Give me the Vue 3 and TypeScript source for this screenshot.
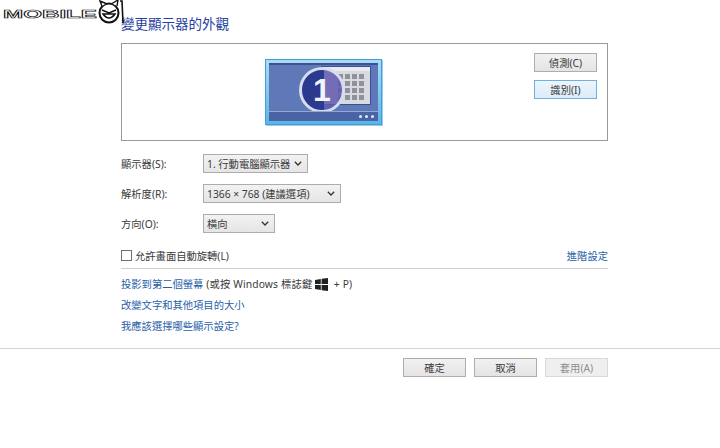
<script setup lang="ts">
const rows = [
  { label: '顯示器(S):', value: '1. 行動電腦顯示器', cls: 'w-display' },
  { label: '解析度(R):', value: '1366 × 768 (建議選項)', cls: 'w-res' },
  { label: '方向(O):', value: '橫向', cls: 'w-orient' },
]
const grid = Array.from({ length: 16 }, (_, i) => i)
</script>

<template>
  <div class="page">
    <svg class="logo" width="128" height="26" viewBox="0 0 128 26">
      <text x="3" y="17.500" textLength="94" lengthAdjust="spacingAndGlyphs" class="logo-text">MOBILE</text>
      <circle cx="109" cy="13" r="9.500" fill="#fff" stroke="#111" stroke-width="2" />
      <path d="M102 6 L100 1 L106 3.500 M112 3.500 L118 0 L117 6" fill="#fff" stroke="#111" stroke-width="1.400" />
      <path d="M102 10 L109 13 L116 10 M103 14 Q109 22 115 14 Z" fill="none" stroke="#111" stroke-width="1.500" />
      <path d="M120 1 L122 1 L123 23" fill="none" stroke="#111" stroke-width="1.600" />
    </svg>

    <main class="content">
      <h1 class="title">變更顯示器的外觀</h1>

      <section class="preview">
        <div class="monitor">
          <div class="screen">
            <div class="win">
              <div class="win-bar"></div>
              <div class="win-grid">
                <i v-for="n in grid" :key="n"></i>
              </div>
            </div>
            <div class="badge">1</div>
            <div class="taskbar">
              <b></b><b></b><b></b>
            </div>
          </div>
        </div>
        <div class="preview-buttons">
          <button class="btn btn-detect">偵測(C)</button>
          <button class="btn btn-detect btn-focus">識別(I)</button>
        </div>
      </section>

      <div class="form">
        <div v-for="r in rows" :key="r.label" class="row">
          <span class="label">{{ r.label }}</span>
          <div class="select" :class="r.cls">
            <span>{{ r.value }}</span>
            <svg width="8" height="5" viewBox="0 0 8 5"><path d="M.8 .8 L4 4 L7.200 .8" fill="none" stroke="#333" stroke-width="1.300" /></svg>
          </div>
        </div>
      </div>

      <div class="check-row">
        <label class="check"><span class="box"></span>允許畫面自動旋轉(L)</label>
        <a class="link">進階設定</a>
      </div>

      <div class="links">
        <div class="link-line">
          <a class="link">投影到第二個螢幕</a>
          <span class="hint">&nbsp;(或按 Windows 標誌鍵&nbsp;</span>
          <svg class="winlogo" width="13" height="13" viewBox="0 0 13 13"><path d="M0 2 L5.800 1 V6 H0 Z M6.600 .8 L13 0 V6 H6.600 Z M0 7 H5.800 V12 L0 11 Z M6.600 7 H13 V13 L6.600 12.200 Z" fill="#222" /></svg>
          <span class="hint">&nbsp;&nbsp;+ P)</span>
        </div>
        <a class="link">改變文字和其他項目的大小</a>
        <a class="link">我應該選擇哪些顯示設定?</a>
      </div>
    </main>

    <footer class="footer">
      <button class="btn btn-action">確定</button>
      <button class="btn btn-action">取消</button>
      <button class="btn btn-action btn-disabled">套用(A)</button>
    </footer>
  </div>
</template>

<style>
html, body { margin: 0; background: #fff; }
</style>

<style scoped>
.page {
  position: relative;
  width: 720px;
  height: 448px;
  background: #fff;
  overflow: hidden;
  font-family: "Noto Sans", "Noto Sans CJK TC", sans-serif;
  font-size: 10.300px;
  color: #3a3a3a;
}
.logo { position: absolute; left: 0; top: 0; }
.logo-text {
  font-family: "Liberation Sans", sans-serif;
  font-size: 11.500px;
  font-weight: 700;
  fill: #fff;
  stroke: #111;
  stroke-width: .6;
}
.content {
  width: 487px;
  margin-left: 121px;
  padding-top: 15px;
}
.title {
  margin: 0 0 9px;
  height: 19px;
  line-height: 19px;
  font-size: 13.500px;
  font-weight: 400;
  color: #1f429f;
}
.preview {
  box-sizing: border-box;
  height: 98px;
  border: 1px solid #9a9a9a;
  display: flex;
  padding: 15px 10px 0 143px;
  justify-content: space-between;
}
.monitor {
  box-sizing: border-box;
  width: 117px;
  height: 66px;
  padding: 3px;
  background: linear-gradient(180deg, #a9dcf5, #5cb5e6);
  border: 1px solid #3d9fdc;
  box-shadow: 1px 1px 0 #9bcdeb;
}
.screen {
  position: relative;
  height: 100%;
  background: #5f79b8;
  border-top: 2px solid #3d5292;
  box-sizing: border-box;
  overflow: hidden;
}
.win {
  position: absolute;
  left: 53px;
  top: 2px;
  width: 48px;
  height: 37px;
  background: #d9dae0;
  box-shadow: 0 0 0 1px #39508f;
}
.win-bar { height: 4px; background: #e9ebf0; }
.win-grid {
  display: grid;
  grid-template-columns: repeat(4, 5px);
  grid-auto-rows: 5px;
  gap: 2px;
  padding: 3px 0 0 16px;
}
.win-grid i { background: #8f919b; }
.badge {
  position: absolute;
  left: 30px;
  top: 2px;
  box-sizing: border-box;
  width: 46px;
  height: 46px;
  border-radius: 50%;
  border: 3px solid #d7dcee;
  background: linear-gradient(90deg, #2b3a8e 0 54%, rgba(96, 90, 175, .85) 54%);
  color: #f2f3fb;
  font: 700 32px/40px "Liberation Sans", sans-serif;
  text-align: center;
}
.taskbar {
  position: absolute;
  left: 0;
  right: 0;
  bottom: 0;
  height: 9px;
  border-top: 1px solid #8ea9d8;
  background: #4a63a4;
  display: flex;
  justify-content: flex-end;
  align-items: center;
  gap: 3px;
  padding-right: 4px;
}
.taskbar b {
  width: 3px;
  height: 3px;
  border-radius: 50%;
  background: #e5e9f5;
}
.preview-buttons {
  display: flex;
  flex-direction: column;
  gap: 8px;
  margin-top: -6px;
}
.btn {
  box-sizing: border-box;
  padding: 0;
  font: inherit;
  color: #3a3a3a;
  background: linear-gradient(180deg, #f1f1f1, #e4e4e4);
  border: 1px solid #adadad;
}
.btn-detect { width: 63px; height: 19px; }
.btn-focus {
  background: linear-gradient(180deg, #ecf5fc, #dcecf9);
  border-color: #6fb0de;
}
.form {
  display: flex;
  flex-direction: column;
  gap: 11px;
  margin-top: 13px;
}
.row { display: flex; align-items: center; height: 19px; }
.label { width: 82px; flex: none; }
.select {
  box-sizing: border-box;
  height: 19px;
  display: flex;
  align-items: center;
  justify-content: space-between;
  padding: 0 5px 0 3px;
  background: linear-gradient(180deg, #f2f2f2, #e5e5e5);
  border: 1px solid #acacac;
}
.w-display { width: 105px; }
.w-res { width: 138px; }
.w-orient { width: 72px; }
.check-row {
  display: flex;
  align-items: center;
  justify-content: space-between;
  height: 36px;
  padding: 14px 0 5px;
  box-sizing: border-box;
  border-bottom: 1px solid #cfcfcf;
}
.check { display: flex; align-items: center; gap: 3px; }
.box {
  box-sizing: border-box;
  width: 11px;
  height: 11px;
  background: #fff;
  border: 1px solid #6f6f6f;
}
.link { color: #1f5ea8; }
.links {
  display: flex;
  flex-direction: column;
  gap: 6px;
  margin-top: 8px;
}
.links > * { height: 15px; line-height: 15px; }
.link-line { display: flex; align-items: center; white-space: pre; }
.hint { letter-spacing: .15px; }
.footer {
  position: absolute;
  left: 0;
  right: 0;
  top: 348px;
  box-sizing: border-box;
  height: 29px;
  border-top: 1px solid #d6d6d6;
  padding: 9px 112px 0 0;
  display: flex;
  justify-content: flex-end;
  gap: 8px;
}
.btn-action { width: 63px; height: 19px; }
.btn-disabled {
  color: #8f8f8f;
  background: #efefef;
  border-color: #d9d9d9;
}
</style>
